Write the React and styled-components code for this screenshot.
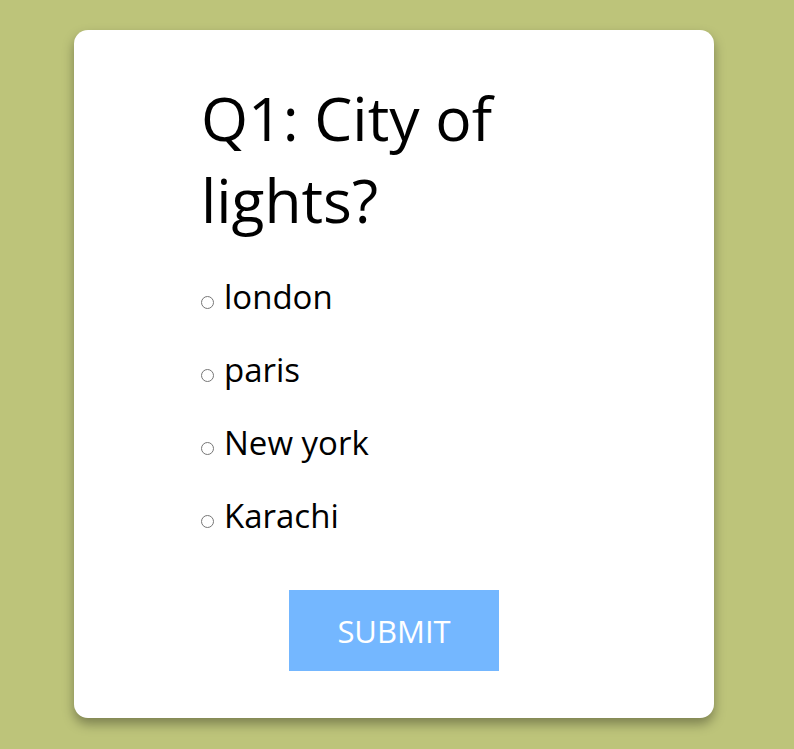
import React from 'react'
import styled, { createGlobalStyle } from 'styled-components'

const GlobalStyle = createGlobalStyle`
    html, body {
        margin: 0;
        padding: 0;
        background: #bdc47a;
        font-family: "Open Sans", "DejaVu Sans", sans-serif;
    }
`

const Page = styled.div`
    display: flex;
    justify-content: center;
    padding: 30px 6px 31px 0;
`

const Card = styled.form`
    width: 640px;
    height: 688px;
    box-sizing: border-box;
    background: #fff;
    border-radius: 14px;
    box-shadow: 0 6px 12px rgba(0, 0, 0, 0.35);
    padding: 49px 0 0;
    display: flex;
    flex-direction: column;
    align-items: center;
`

const Content = styled.div`
    width: 396px;
    box-sizing: border-box;
    padding-left: 2px;
`

const Question = styled.h1`
    font-size: 60.5px;
    font-weight: 400;
    line-height: 82px;
    margin: -2px 0 34px 3px;
    color: #000;
`

const Options = styled.ul`
    list-style: none;
    margin: 0;
    padding: 0;
    display: flex;
    flex-direction: column;
    gap: 29px;
`

const Option = styled.li`
    display: flex;
    align-items: center;
    font-size: 33px;
    line-height: 44px;
    color: #000;
`

const Radio = styled.input`
    margin: 10px 10px 0 3px;
    width: 13px;
    height: 13px;
`

const SubmitButton = styled.button`
    margin-top: 52px;
    width: 210px;
    height: 81px;
    border: none;
    background: #74b7ff;
    color: #fff;
    font-family: inherit;
    font-size: 31px;
    text-transform: uppercase;
    cursor: pointer;
`

const options = ['london', 'paris', 'New york', 'Karachi']

export default function App() {
    return (
        <>
            <GlobalStyle />
            <Page>
                <Card onSubmit={ e => e.preventDefault() }>
                    <Content>
                        <Question>Q1: City of lights?</Question>
                        <Options>
                            { options.map(option => (
                                <Option key={ option }>
                                    <Radio type="radio" name="q1" value={ option } />
                                    <label>{ option }</label>
                                </Option>
                            )) }
                        </Options>
                    </Content>
                    <SubmitButton type="submit">Submit</SubmitButton>
                </Card>
            </Page>
        </>
    )
}
